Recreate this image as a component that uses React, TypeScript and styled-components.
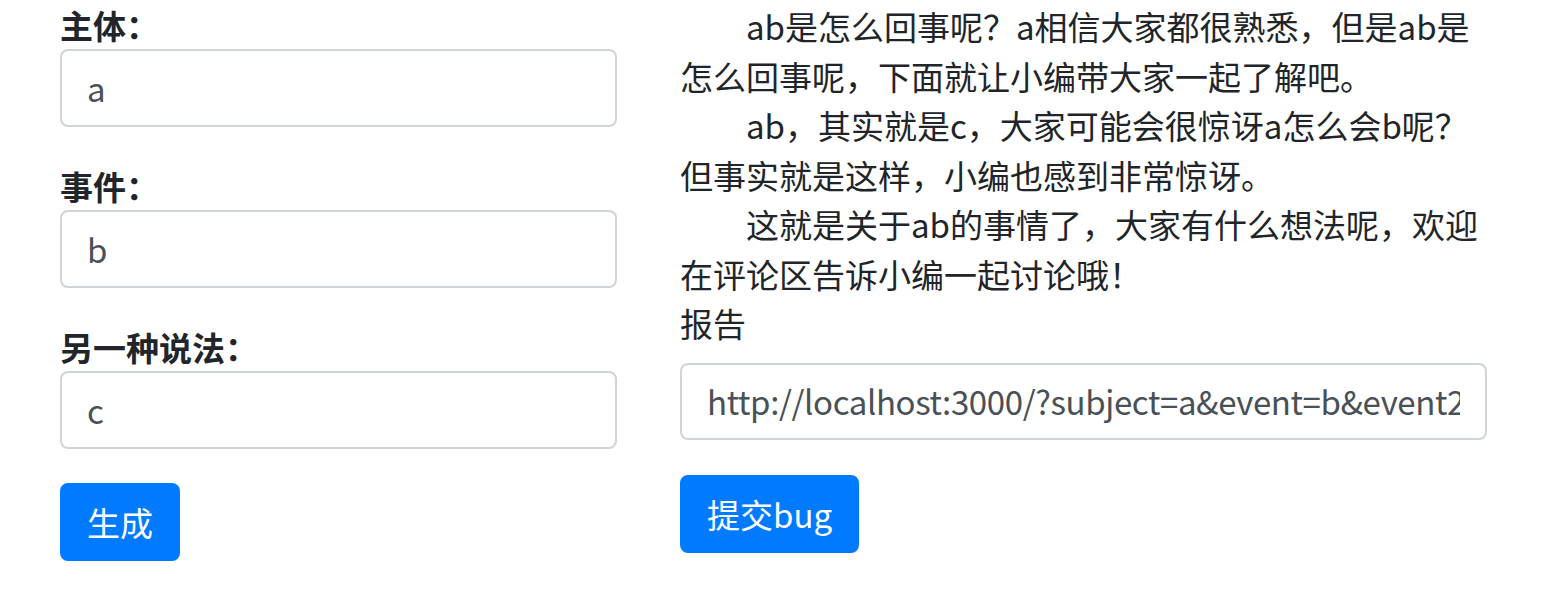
import React from "react";
import styled, { createGlobalStyle } from "styled-components";

const Global = createGlobalStyle`
  html, body { margin: 0; padding: 0; background: #fff; }
  body {
    font-family: "Noto Sans CJK SC", "Noto Sans", sans-serif;
    font-size: 33px;
    line-height: 1.5;
    color: #212529;
  }
  * { box-sizing: border-box; }
`;

const Page = styled.div`
  display: flex;
  align-items: flex-start;
  gap: 63px;
  padding-left: 60px;
`;

const LeftCol = styled.form`
  width: 557px;
  display: flex;
  flex-direction: column;
  padding-top: 7px;
`;

const RightCol = styled.div`
  width: 807px;
  display: flex;
  flex-direction: column;
  padding-top: 2px;
`;

const Group = styled.div`
  display: flex;
  flex-direction: column;
  margin-bottom: 41px;
  &:last-of-type { margin-bottom: 34px; }
`;

const Label = styled.label`
  font-weight: 700;
  line-height: 36px;
  margin-bottom: 6px;
`;

const Input = styled.input<{ $h?: number }>`
  display: block;
  width: 100%;
  height: ${(p) => p.$h ?? 78}px;
  padding: 0 25px;
  font-family: "Noto Sans CJK SC", "Noto Sans", sans-serif;
  font-size: 33px;
  color: #495057;
  background: #fff;
  border: 2px solid #ced4da;
  border-radius: 8px;
  outline: none;
`;

const Button = styled.button`
  align-self: flex-start;
  height: 78px;
  padding: 2px 25px 0;
  font-family: "Noto Sans CJK SC", "Noto Sans", sans-serif;
  font-size: 33px;
  line-height: 1.5;
  color: #fff;
  background: #007bff;
  border: 2px solid #007bff;
  border-radius: 8px;
`;

const Para = styled.p`
  margin: 0;
  text-indent: 2em;
  line-height: 49.5px;
`;

const Plain = styled.div`
  line-height: 49.5px;
`;

const ReportInput = styled(Input)`
  margin-top: 14px;
  margin-bottom: 35px;
  letter-spacing: -0.38px;
`;

export default function App() {
  return (
    <>
      <Global />
      <Page>
        <LeftCol onSubmit={(e) => e.preventDefault()}>
          <Group>
            <Label>主体：</Label>
            <Input defaultValue="a" />
          </Group>
          <Group>
            <Label>事件：</Label>
            <Input defaultValue="b" />
          </Group>
          <Group>
            <Label>另一种说法：</Label>
            <Input defaultValue="c" />
          </Group>
          <Button type="button">生成</Button>
        </LeftCol>
        <RightCol>
          <Para>ab是怎么回事呢？a相信大家都很熟悉，但是ab是怎么回事呢，下面就让小编带大家一起了解吧。</Para>
          <Para>ab，其实就是c，大家可能会很惊讶a怎么会b呢？但事实就是这样，小编也感到非常惊讶。</Para>
          <Para>这就是关于ab的事情了，大家有什么想法呢，欢迎在评论区告诉小编一起讨论哦！</Para>
          <Plain>报告</Plain>
          <ReportInput $h={77} readOnly value="http://localhost:3000/?subject=a&event=b&event2=c" />
          <Button type="button">提交bug</Button>
        </RightCol>
      </Page>
    </>
  );
}
